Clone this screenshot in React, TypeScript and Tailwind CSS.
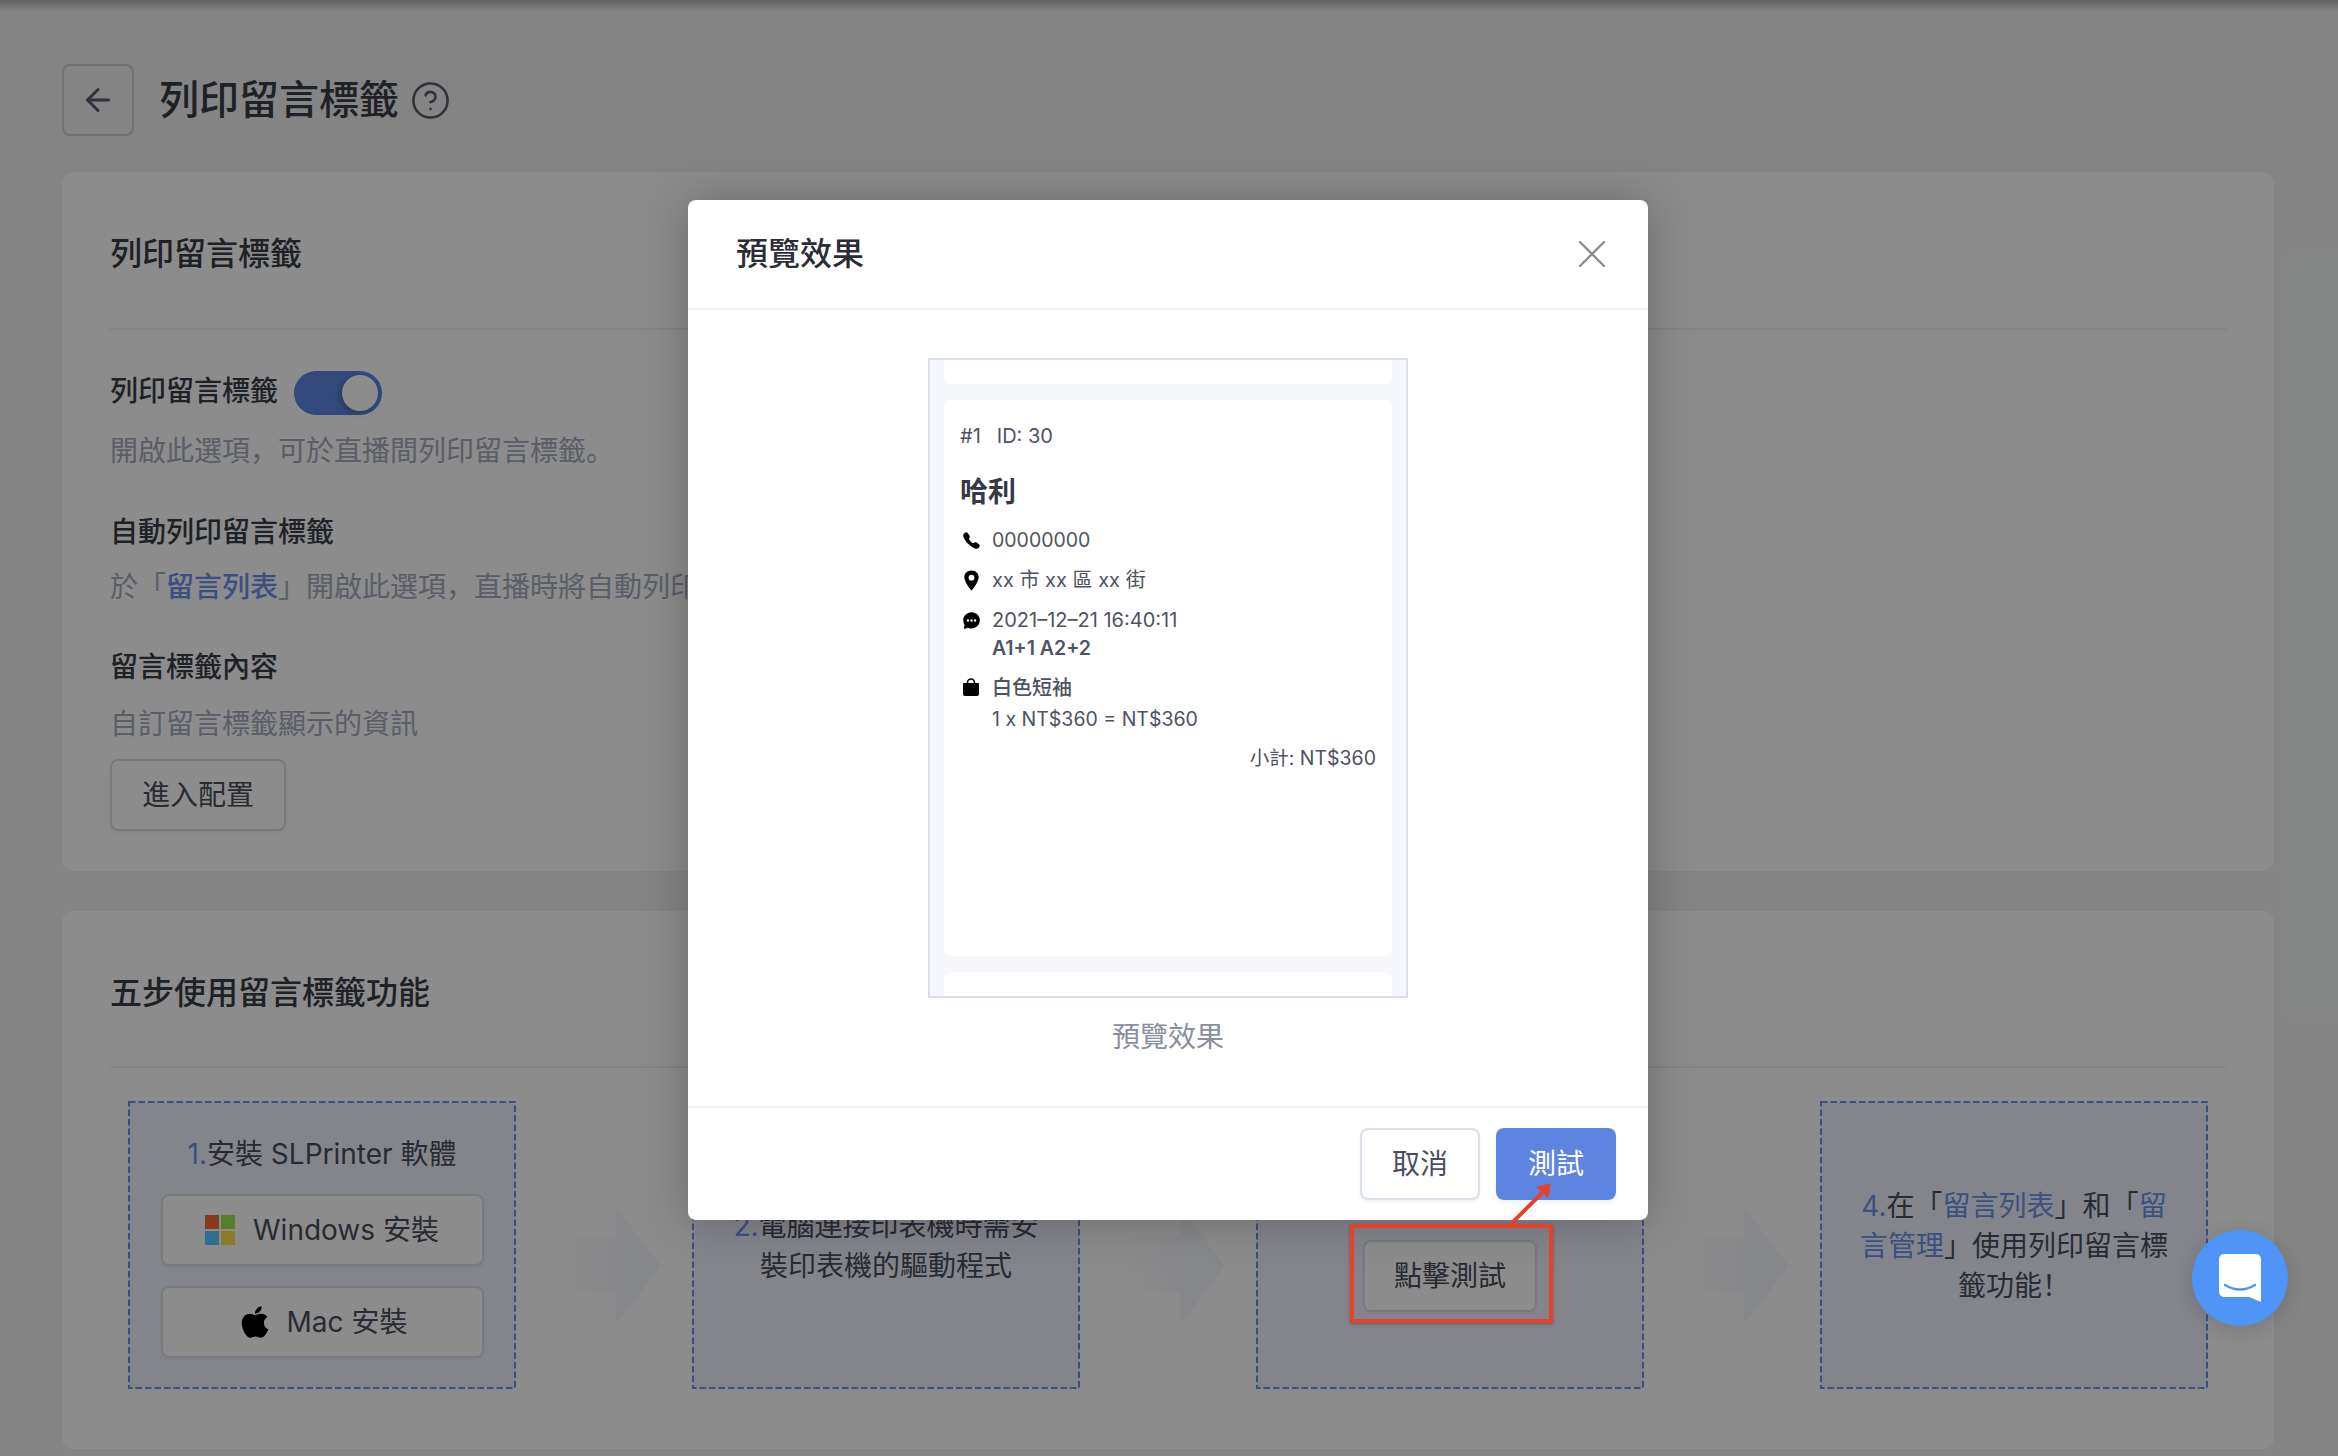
import { ArrowLeft, CircleHelp, X } from "lucide-react"
import { FaApple } from "react-icons/fa"
import { IoCall, IoChatbubbleEllipses, IoLocationSharp } from "react-icons/io5"

function StepArrow() {
  return (
    <div className="flex w-[176px] shrink-0 items-center pl-[36px] pt-[42px]">
      <svg width="108" height="112" viewBox="0 0 108 112">
        <defs>
          <linearGradient id="stepArrowFill" x1="0" y1="0" x2="1" y2="0">
            <stop offset="0.05" stopColor="#f4f6fd" stopOpacity="0" />
            <stop offset="0.6" stopColor="#f4f6fd" stopOpacity="0.8" />
            <stop offset="1" stopColor="#f4f6fd" />
          </linearGradient>
        </defs>
        <path d="M0 27H64V3C64 0 67 0 68 2L107 54C108 55 108 57 107 58L68 110C67 112 64 112 64 109V83H0Z" fill="url(#stepArrowFill)" />
      </svg>
    </div>
  )
}

function WindowsLogo() {
  return (
    <svg width="30" height="30" viewBox="0 0 30 30" className="shrink-0">
      <rect x="0" y="0" width="14" height="14" fill="#fb6a33" />
      <rect x="16" y="0" width="14" height="14" fill="#9be94c" />
      <rect x="0" y="16" width="14" height="14" fill="#56caff" />
      <rect x="16" y="16" width="14" height="14" fill="#ffde49" />
    </svg>
  )
}

function BagIcon() {
  return (
    <svg width="18" height="19" viewBox="0 0 18 19" className="ml-[2px] mt-[4px] shrink-0">
      <path d="M5.5 6V4.5a3.5 3.5 0 0 1 7 0V6" stroke="black" strokeWidth="1.6" fill="none" />
      <path d="M2 5H16A1 1 0 0 1 17 6V16A2 2 0 0 1 15 18H3A2 2 0 0 1 1 16V6A1 1 0 0 1 2 5Z" fill="black" />
    </svg>
  )
}

function OutlineButton({ children, className }: { children: React.ReactNode; className: string }) {
  return (
    <button className={`flex h-[72px] items-center justify-center rounded-lg border-2 border-[#d8e0ea] bg-white text-[28px] leading-[40px] text-[#4a4f5c] shadow-[0_2px_4px_rgba(0,0,0,0.05)] ${className}`}>
      {children}
    </button>
  )
}

function StepBox({ children }: { children: React.ReactNode }) {
  return (
    <div className="relative flex h-[288px] w-[388px] shrink-0 flex-col items-center justify-center bg-[#f0f3fe] px-[32px] pt-[2px] text-center text-[28px] leading-[40px] text-[#4a4f5c]">
      {/* dashed frame, css dashes come out too short */}
      <svg className="absolute inset-0" width="388" height="288" viewBox="0 0 388 288">
        <rect x="1" y="1" width="386" height="286" fill="none" stroke="#6b94ea" strokeWidth="2" strokeDasharray="6.5 3" />
      </svg>
      {children}
    </div>
  )
}

function PreviewModal() {
  return (
    <div className="absolute left-[688px] top-[200px] w-[960px] rounded-lg bg-white shadow-[0_0_48px_rgba(0,0,0,0.25)]">
      <div className="flex h-[110px] items-center justify-between border-b-2 border-[#f0f0f0] pl-[48px] pr-[32px]">
        <div className="text-[32px] font-medium leading-[44px] text-[#2a2d36]">預覽效果</div>
        <X className="size-[48px] text-[#8c8c8c]" strokeWidth={1.2} />
      </div>

      <div className="flex h-[796px] flex-col items-center pt-[48px]">
        {/* Label preview, cards are cut off by the frame */}
        <div className="flex h-[640px] w-[480px] flex-col gap-[16px] overflow-hidden border-2 border-[#dcdfec] bg-[#f6f7fb] px-[14px]">
          <div className="h-[24px] shrink-0 rounded-b-lg bg-white" />
          <div className="flex h-[556px] shrink-0 flex-col rounded-lg bg-white px-[16px] text-[20px] leading-[28px] text-[#4e5362]">
            <div className="mt-[22px] flex gap-[16px]">
              <span>#1</span>
              <span>ID: 30</span>
            </div>
            <div className="mt-[22px] text-[28px] font-semibold leading-[40px] text-[#353945]">哈利</div>
            <div className="mt-[14px] flex items-center gap-[11px]">
              <IoCall className="ml-[2px] size-[19px] shrink-0 text-black" />
              <span className="text-[19.5px]">00000000</span>
            </div>
            <div className="mt-[12px] flex items-center gap-[9px]">
              <IoLocationSharp className="size-[23px] shrink-0 text-black" />
              <span>xx 市 xx 區 xx 街</span>
            </div>
            <div className="mt-[12px] flex gap-[11px]">
              <IoChatbubbleEllipses className="ml-[2px] mt-[5px] size-[19px] shrink-0 text-black" />
              <div>
                <div>2021–12–21 16:40:11</div>
                <div className="text-[19.5px] font-semibold">A1+1 A2+2</div>
              </div>
            </div>
            <div className="mt-[12px] flex gap-[12px]">
              <BagIcon />
              <div>
                <div className="font-medium">白色短袖</div>
                <div className="mt-[3px] text-[19.5px]">1 x NT$360 = NT$360</div>
              </div>
            </div>
            <div className="mt-[11px] text-right text-[19.5px]">小計: NT$360</div>
          </div>
          <div className="h-[40px] shrink-0 rounded-t-lg bg-white" />
        </div>
        <div className="mt-[19px] text-[28px] leading-[40px] text-[#8a8fa0]">預覽效果</div>
      </div>

      <div className="flex h-[114px] justify-end gap-[16px] border-t-2 border-[#f0f0f0] pr-[32px] pt-[20px]">
        <OutlineButton className="w-[120px]">取消</OutlineButton>
        <button className="h-[72px] w-[120px] rounded-lg bg-[#5d84e0] text-[28px] leading-[40px] text-white shadow-[0_3px_4px_rgba(0,0,0,0.05)]">測試</button>
      </div>
    </div>
  )
}

export default function App() {
  return (
    <div className="relative h-[1456px] overflow-hidden bg-[#f0f1f1] [font-family:Inter,'Noto_Sans_CJK_SC',sans-serif]">
      <div className="h-[12px] bg-gradient-to-b from-black/25 to-transparent" />

      <div className="pl-[62px] pr-[64px] pt-[52px]">
        <div className="flex h-[72px] items-center">
          <button className="flex size-[72px] items-center justify-center rounded-lg border-2 border-[#c9cfdb]">
            <ArrowLeft className="size-[36px] text-[#555b6a]" strokeWidth={2} />
          </button>
          <h1 className="ml-[25px] text-[40px] font-medium leading-[56px] text-[#383e47]">列印留言標籤</h1>
          <CircleHelp className="ml-[11px] size-[41px] text-[#555b6a]" strokeWidth={1.5} />
        </div>

        {/* Settings card */}
        <div className="mt-[36px] rounded-xl bg-white px-[48px] pb-[40px]">
          <div className="border-b-2 border-[#f0f0f0] pb-[54px] pt-[62px] text-[32px] font-medium leading-[40px] text-[#383e47]">列印留言標籤</div>

          <div className="mt-[41px] flex h-[44px] items-center gap-[16px]">
            <div className="pb-[4px] text-[28px] font-medium leading-[40px] text-[#383e47]">列印留言標籤</div>
            <div className="flex h-[44px] w-[88px] items-center justify-end rounded-full bg-[#5e85e2] pr-[4px]">
              <div className="size-[36px] rounded-full bg-white shadow-[-2px_2px_6px_rgba(0,0,0,0.25)]" />
            </div>
          </div>
          <p className="mt-[16px] text-[28px] leading-[40px] text-[#a4abbc]">開啟此選項，可於直播間列印留言標籤。</p>

          <div className="mt-[41px] text-[28px] font-medium leading-[40px] text-[#383e47]">自動列印留言標籤</div>
          <p className="mt-[15px] text-[28px] leading-[40px] text-[#a4abbc]">
            於「<span className="font-medium text-[#6b94ea]">留言列表</span>」開啟此選項，直播時將自動列印留言標籤。
          </p>

          <div className="mt-[40px] text-[28px] font-medium leading-[40px] text-[#383e47]">留言標籤內容</div>
          <p className="mt-[17px] text-[28px] leading-[40px] text-[#a4abbc]">自訂留言標籤顯示的資訊</p>
          <OutlineButton className="mt-[15px] w-[176px]">進入配置</OutlineButton>
        </div>

        {/* Five steps card */}
        <div className="mt-[40px] rounded-xl bg-white px-[48px] pb-[60px]">
          <div className="border-b-2 border-[#f0f0f0] pb-[53px] pt-[62px] text-[32px] font-medium leading-[40px] text-[#383e47]">五步使用留言標籤功能</div>

          <div className="mt-[33px] flex pl-[18px]">
            <StepBox>
              <div><span className="text-[#6b94ea]">1.</span>安裝 SLPrinter 軟體</div>
              <OutlineButton className="mt-[20px] w-[323px] gap-[18px]">
                <WindowsLogo />
                Windows 安裝
              </OutlineButton>
              <OutlineButton className="mt-[20px] w-[323px] gap-[14px]">
                <FaApple className="size-[36px] text-black" />
                Mac 安裝
              </OutlineButton>
            </StepBox>
            <StepArrow />
            <StepBox>
              <div><span className="text-[#6b94ea]">2.</span>電腦連接印表機時需安裝印表機的驅動程式</div>
            </StepBox>
            <StepArrow />
            <StepBox>
              <div className="h-[59px]" />
              <OutlineButton className="w-[174px]">點擊測試</OutlineButton>
            </StepBox>
            <StepArrow />
            <StepBox>
              <div>
                <span className="text-[#6b94ea]">4.</span>在「<span className="text-[#6b94ea]">留言列表</span>」和「<span className="text-[#6b94ea]">留言管理</span>」使用列印留言標籤功能！
              </div>
            </StepBox>
          </div>
        </div>
      </div>

      {/* Dim layer under the dialog */}
      <div className="absolute inset-0 bg-black/45" />

      <PreviewModal />

      {/* Red annotation over the test button */}
      <div className="absolute left-[1350px] top-[1224px] h-[99px] w-[203px] border-[4px] border-[#e8412a] shadow-[0_1px_3px_rgba(0,0,0,0.3)]" />
      <svg className="absolute left-[1500px] top-[1176px]" width="60" height="56" viewBox="0 0 60 56">
        <path d="M9 50L42 17" stroke="#e8412a" strokeWidth="4" fill="none" />
        <path d="M51 7L36 11L48 22Z" fill="#e8412a" />
      </svg>

      {/* Chat bubble */}
      <div className="absolute left-[2192px] top-[1230px] flex size-[96px] items-center justify-center rounded-full bg-[#4f94f6] shadow-[0_4px_20px_rgba(0,0,0,0.15)]">
        <svg width="42" height="48" viewBox="0 0 42 48">
          <path d="M5 0H37A5 5 0 0 1 42 5V48L30 43H5A5 5 0 0 1 0 38V5A5 5 0 0 1 5 0Z" fill="white" />
          <path d="M6 31Q21 40 36 31" stroke="#4f94f6" strokeWidth="2.5" fill="none" strokeLinecap="round" />
        </svg>
      </div>
    </div>
  )
}
